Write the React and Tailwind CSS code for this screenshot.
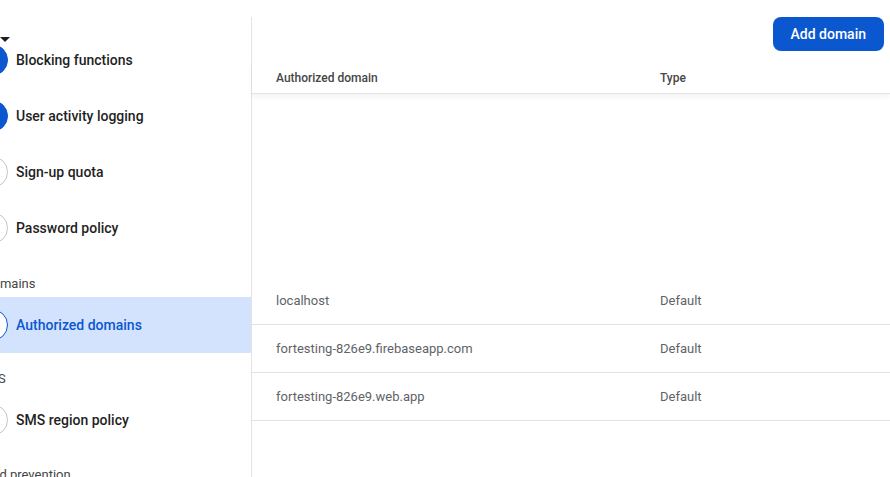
import React from 'react';

const font = { fontFamily: 'Roboto, "Noto Sans", sans-serif' };

function NavItem({ label, kind, active }) {
    const dot =
        kind === 'filled'
            ? 'bg-[#0b57d0] border-[#0b57d0]'
            : active
                ? 'bg-white border-[#0b57d0]'
                : 'bg-white border-[#c4c7c5]';
    return (
        <div className={'flex items-center gap-2 h-14 ' + (active ? 'bg-[#d3e3fd]' : '')}>
            <span className={'w-8 h-8 shrink-0 rounded-full border ' + dot} />
            <span className={'text-sm font-medium ' + (active ? 'text-[#0b57d0]' : 'text-[#1f1f1f]')}>{label}</span>
        </div>
    );
}

function Heading({ children, shift }) {
    return <div className={'h-[26px] flex items-center text-[13px] text-[#444746] ' + shift}>{children}</div>;
}

const domains = [
    'localhost',
    'fortesting-826e9.firebaseapp.com',
    'fortesting-826e9.web.app',
];

export default function App() {
    return (
        <div className="flex h-[477px] w-[890px] bg-white overflow-hidden" style={font}>
            <aside className="w-[252px] shrink-0 pt-[17px] overflow-hidden">
                <div className="h-full border-r border-[#e3e3e3] -ml-6">
                    <div className="relative">
                        <span className="absolute left-6 top-[20px] w-0 h-0 border-l-[5px] border-r-[5px] border-t-[5px] border-l-transparent border-r-transparent border-t-[#1f1f1f]" />
                        <div className="h-[15px]" />
                        <NavItem label="Blocking functions" kind="filled" />
                        <NavItem label="User activity logging" kind="filled" />
                        <NavItem label="Sign-up quota" />
                        <NavItem label="Password policy" />
                        <div className="pt-[15px]">
                            <Heading shift="ml-2">Domains</Heading>
                        </div>
                        <NavItem label="Authorized domains" active />
                        <div className="pt-[13px]">
                            <Heading shift="ml-[3px]">SMS</Heading>
                        </div>
                        <NavItem label="SMS region policy" />
                        <div className="pt-[14px]">
                            <Heading shift="-ml-[2px]">Fraud prevention</Heading>
                        </div>
                    </div>
                </div>
            </aside>

            <main className="flex-1 flex flex-col pt-[17px]">
                <div className="flex justify-end pr-[6px]">
                    <button className="h-[34px] px-[18px] rounded-lg bg-[#0b57d0] text-white text-sm font-medium">
                        Add domain
                    </button>
                </div>
                <div className="mt-[11px] h-[32px] grid grid-cols-[384px_1fr] items-center px-6 border-b border-[#e3e3e3] shadow-[0_3px_6px_rgba(0,0,0,0.05)] text-xs font-medium text-[#444746]">
                    <span>Authorized domain</span>
                    <span>Type</span>
                </div>
                <div className="h-[183px]" />
                {domains.map((d) => (
                    <div key={d} className="h-12 grid grid-cols-[384px_1fr] items-center px-6 border-b border-[#e3e3e3] text-[13px] text-[#5f6368]">
                        <span>{d}</span>
                        <span>Default</span>
                    </div>
                ))}
            </main>
        </div>
    );
}
